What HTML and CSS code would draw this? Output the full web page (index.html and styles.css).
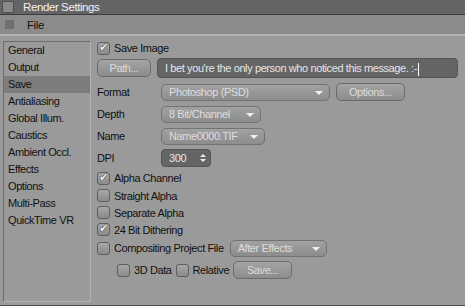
FILE: index.html
```html
<!DOCTYPE html>
<html>
<head>
    <title>Render Settings</title>
    <link rel="stylesheet" href="styles.css">
</head>
<body>
    <div class="window">
        <div class="titlebar">
            <span class="title-box"></span>
            <span class="title-text">Render Settings</span>
        </div>
        <div class="menubar">
            <span class="grip"></span>
            <span class="menu-item">File</span>
        </div>

        <div class="main">
            <!-- Page list on the left -->
            <ul class="pages">
                <li>General</li>
                <li>Output</li>
                <li class="active">Save</li>
                <li>Antialiasing</li>
                <li>Global Illum.</li>
                <li>Caustics</li>
                <li>Ambient Occl.</li>
                <li>Effects</li>
                <li>Options</li>
                <li>Multi-Pass</li>
                <li>QuickTime VR</li>
            </ul>

            <div class="settings">
                <div class="row r-save">
                    <span class="check on"></span>
                    <span>Save Image</span>
                </div>
                <div class="row r-path">
                    <span class="btn btn-path">Path...</span>
                    <span class="field">I bet you're the only person who noticed this message. :-<span class="caret"></span></span>
                </div>
                <div class="row r-field">
                    <span class="label">Format</span>
                    <span class="drop drop-format">Photoshop (PSD)</span>
                    <span class="btn btn-options">Options...</span>
                </div>
                <div class="row r-field">
                    <span class="label">Depth</span>
                    <span class="drop drop-depth">8 Bit/Channel</span>
                </div>
                <div class="row r-field">
                    <span class="label">Name</span>
                    <span class="drop drop-name">Name0000.TIF</span>
                </div>
                <div class="row r-field">
                    <span class="label">DPI</span>
                    <span class="spin">300</span>
                </div>
                <div class="row r-check r-first">
                    <span class="check on"></span>
                    <span>Alpha Channel</span>
                </div>
                <div class="row r-check">
                    <span class="check"></span>
                    <span>Straight Alpha</span>
                </div>
                <div class="row r-check">
                    <span class="check"></span>
                    <span>Separate Alpha</span>
                </div>
                <div class="row r-check">
                    <span class="check on"></span>
                    <span>24 Bit Dithering</span>
                </div>
                <div class="row r-comp">
                    <span class="check"></span>
                    <span>Compositing Project File</span>
                    <span class="drop drop-ae">After Effects</span>
                </div>
                <div class="row r-sub">
                    <span class="check"></span>
                    <span>3D Data</span>
                    <span class="check"></span>
                    <span>Relative</span>
                    <span class="btn btn-save">Save...</span>
                </div>
            </div>
        </div>
    </div>
</body>
</html>
```

FILE: styles.css
```css
body {
    margin: 0;
    font-family: 'Liberation Sans', Arial, sans-serif;
    font-size: 11px;
    letter-spacing: -0.4px;
    color: #111;
    background-color: #9a9a9a;
    overflow: hidden;
}

.window {
    width: 465px;
    height: 306px;
    display: flex;
    flex-direction: column;
    background-color: #9a9a9a;
    border-bottom: 1px solid #4a4a4a;
    box-sizing: border-box;
}

/* Title + menu */
.titlebar {
    height: 14px;
    background-color: #646464;
    border-bottom: 1px solid #3c3c3c;
    display: flex;
    align-items: center;
    gap: 9px;
    padding-left: 2px;
}

.title-box {
    width: 10px;
    height: 10px;
    background-color: #8a8a8a;
    border: 1px solid #505050;
}

.title-text {
    color: #f2f2f2;
    font-size: 11.5px;
}

.menubar {
    height: 19px;
    background-color: #8b8b8b;
    border-bottom: 2px solid #b4b4b4;
    display: flex;
    align-items: center;
    gap: 13px;
    padding-left: 5px;
}

.grip {
    width: 9px;
    height: 9px;
    background-image: radial-gradient(#555 45%, transparent 55%);
    background-size: 2px 2px;
}

.menu-item {
    font-size: 11.5px;
}

.main {
    flex: 1;
    display: flex;
    gap: 6px;
    padding: 5px 0 3px 3px;
}

/* Left list */
.pages {
    list-style: none;
    margin: 0;
    padding: 0;
    width: 86px;
    border: 1px solid #b2b2b2;
    border-top-color: #6e6e6e;
    border-left-color: #6e6e6e;
}

.pages li {
    height: 17px;
    line-height: 17px;
    padding-left: 4px;
}

.pages li.active {
    background-color: #7d7d7d;
}

/* Right side */
.settings {
    flex: 1;
    display: flex;
    flex-direction: column;
}

.row {
    display: flex;
    align-items: center;
    gap: 4px;
}

.r-save { height: 16px; margin-top: -1px; }
.r-path { height: 20px; margin-top: 2px; gap: 6px; }
.r-field { height: 22px; }
.r-field:nth-child(3) { margin-top: 3px; }
.r-check { height: 17px; }
.r-first { height: 18px; }
.r-comp { height: 20px; }
.r-sub { height: 24px; padding-left: 20px; }

.label {
    width: 60px;
}

.check {
    width: 11px;
    height: 11px;
    border: 1px solid #5e5e5e;
    border-radius: 3px;
    background: linear-gradient(#a8a8a8, #8a8a8a);
    position: relative;
    flex: none;
}

.check.on::after {
    content: '\2714';
    position: absolute;
    left: 1px;
    top: -2px;
    font-size: 11px;
    color: #f4f4f4;
    text-shadow: 0 0 1px #222, 0 0 1px #222;
}

.btn {
    height: 16px;
    line-height: 16px;
    border: 1px solid #6c6c6c;
    border-radius: 5px;
    background: linear-gradient(#a4a4a4, #8c8c8c);
    color: #dcdcdc;
    text-align: center;
}

.btn-path { width: 52px; }
.btn-options { width: 67px; margin-left: 2px; }
.btn-save { width: 57px; }

.field {
    width: 292px;
    height: 18px;
    line-height: 18px;
    border-radius: 4px;
    background-color: #656565;
    border: 1px solid #555;
    color: #e6e6e6;
    padding-left: 7px;
    white-space: nowrap;
    overflow: hidden;
}

.caret {
    display: inline-block;
    width: 1px;
    height: 13px;
    margin-left: 1px;
    vertical-align: middle;
    background-color: #fff;
}

.drop {
    height: 15px;
    line-height: 15px;
    border: 1px solid #727272;
    border-radius: 5px;
    background: linear-gradient(#a2a2a2, #8c8c8c);
    color: #dedede;
    padding-left: 7px;
    position: relative;
    box-sizing: content-box;
}

.drop::after {
    content: '';
    position: absolute;
    right: 6px;
    top: 6px;
    border-left: 4px solid transparent;
    border-right: 4px solid transparent;
    border-top: 4px solid #f0f0f0;
}

.drop-format { width: 160px; }
.drop-depth { width: 91px; }
.drop-name { width: 95px; }
.drop-ae { width: 88px; margin-left: 2px; }

.spin {
    width: 41px;
    height: 16px;
    line-height: 16px;
    background-color: #656565;
    border: 1px solid #555;
    border-radius: 4px;
    color: #e8e8e8;
    padding-left: 7px;
    position: relative;
}

.spin::before,
.spin::after {
    content: '';
    position: absolute;
    right: 4px;
    border-left: 3px solid transparent;
    border-right: 3px solid transparent;
}

.spin::before {
    top: 4px;
    border-bottom: 3px solid #eee;
}

.spin::after {
    top: 9px;
    border-top: 3px solid #eee;
}
```
